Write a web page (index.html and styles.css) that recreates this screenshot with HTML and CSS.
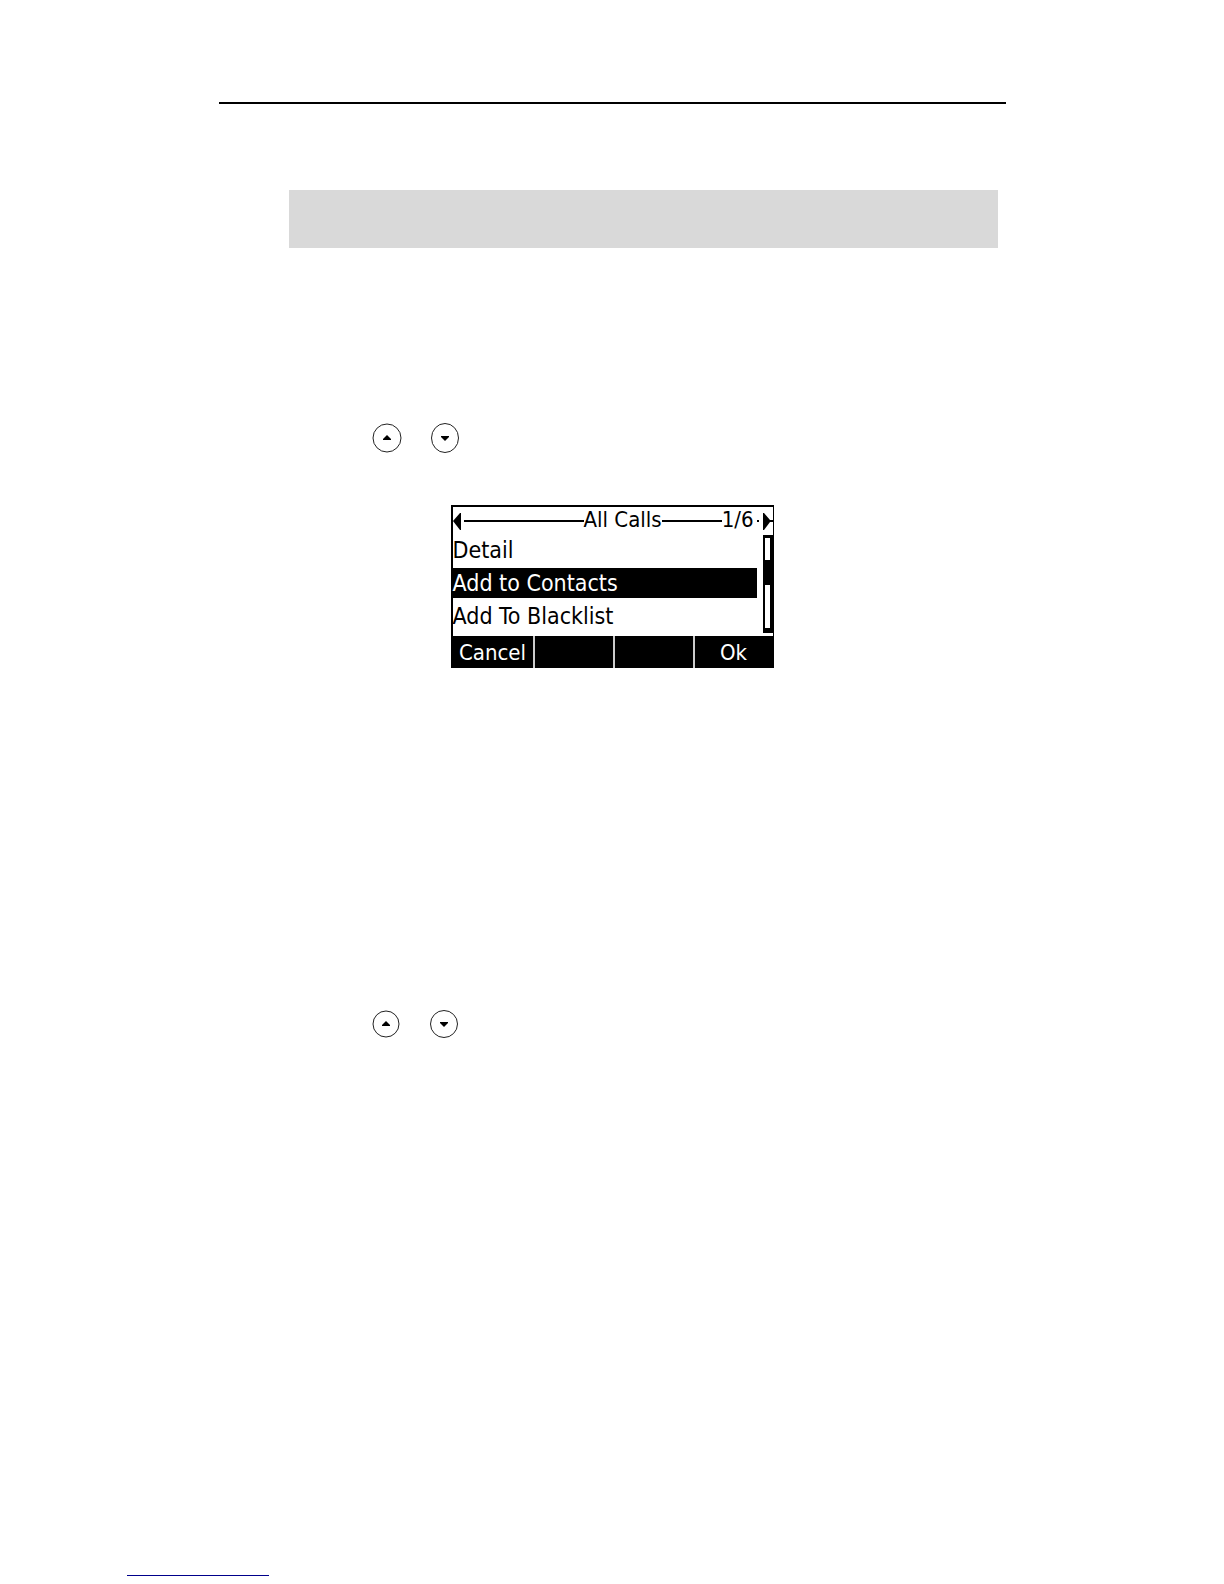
FILE: index.html
```html
<!DOCTYPE html>
<html lang="en">

<head>
  <meta charset="UTF-8" />
  <meta name="viewport" content="width=device-width, initial-scale=1.0" />
  <title>All Calls</title>
  <link rel="stylesheet" href="styles.css">
</head>

<body>
  <main class="page">
    <hr class="rule">
    <div class="note"></div>

    <div class="nav-keys">
      <button type="button" aria-label="Up">
        <svg width="30" height="30" viewBox="0 0 30 30">
          <circle cx="15" cy="15" r="14" />
          <path d="M11 17v-1l4-4 4 4v1z" />
        </svg>
      </button>
      <button type="button" aria-label="Down">
        <svg width="30" height="30" viewBox="0 0 30 30">
          <ellipse cx="15" cy="15" rx="13.5" ry="14.5" />
          <path d="M11 13h8v1l-4 4-4-4z" />
        </svg>
      </button>
    </div>

    <section class="screen">
      <header class="title-bar">
        <svg width="9" height="17" viewBox="0 0 9 17"><path d="M0 8L7 0h1v17H7z" /></svg>
        <span class="line line-left"></span>
        <span class="title-text">All Calls</span>
        <span class="line"></span>
        <span class="title-text">1/6</span>
        <span class="line dot"></span>
        <svg width="11" height="17" viewBox="0 0 11 17"><path d="M1 0h1l6 7h3v2H8l-6 8H1z" /></svg>
      </header>
      <div class="screen-body">
        <ul class="menu">
          <li>Detail</li>
          <li class="selected">Add to Contacts</li>
          <li>Add To Blacklist</li>
        </ul>
        <div class="scrollbar">
          <span class="track-top"></span>
          <span class="thumb"></span>
          <span class="track-bottom"></span>
        </div>
      </div>
      <footer class="soft-keys">
        <button type="button">Cancel</button>
        <button type="button" aria-label="Soft key 2"></button>
        <button type="button" aria-label="Soft key 3"></button>
        <button type="button">Ok</button>
      </footer>
    </section>

    <div class="nav-keys nav-keys-small">
      <button type="button" aria-label="Up">
        <svg width="28" height="28" viewBox="0 0 28 28">
          <circle cx="14" cy="14" r="13" />
          <path d="M10 16v-1l4-4 4 4v1z" />
        </svg>
      </button>
      <button type="button" aria-label="Down">
        <svg width="28" height="28" viewBox="0 0 28 28">
          <circle cx="14" cy="14" r="13.5" />
          <path d="M10 12h8v1l-4 4-4-4z" />
        </svg>
      </button>
    </div>
  </main>

  <footer class="page-footer">
    <div class="link-line"></div>
  </footer>
</body>

</html>
```

FILE: styles.css
```css
* {
  box-sizing: border-box;
}

body {
  margin: 0;
  min-height: 100vh;
  display: flex;
  flex-direction: column;
  background-color: #fff;
  color: #000;
}

button {
  padding: 0;
  border: 0;
  background: none;
  color: inherit;
  font: inherit;
}

.page {
  width: 100%;
  max-width: 787px;
  margin: 0 auto;
  padding-top: 102px;
}

.rule {
  height: 2px;
  margin: 0;
  border: 0;
  background-color: #000;
}

.note {
  height: 58px;
  margin: 86px 8px 0 70px;
  background-color: #d9d9d9;
}

/* up / down keys */
.nav-keys {
  display: flex;
  gap: 28px;
  margin: 175px 0 0 153px;
}

.nav-keys-small {
  gap: 30px;
  margin-top: 342px;
}

.nav-keys svg {
  display: block;
}

.nav-keys circle,
.nav-keys ellipse {
  fill: none;
  stroke: #222;
}

/* phone display */
.screen {
  width: 323px;
  max-width: 100%;
  margin: 52px auto 0;
  border: 2px solid #000;
  border-right-width: 1px;
  border-bottom: 0;
  font-family: "DejaVu Sans Condensed", "DejaVu Sans", sans-serif;
  font-size: 22px;
  line-height: 30px;
}

.title-bar {
  display: flex;
  align-items: center;
  height: 28px;
}

.title-text {
  align-self: flex-start;
  line-height: 26px;
}

.title-bar .line {
  flex: 1;
  height: 2px;
  background-color: #000;
}

.title-bar .line-left {
  flex: 2;
  margin-left: 2px;
}

.title-bar .dot {
  flex: none;
  width: 2px;
  margin: 0 3px;
}

.screen-body {
  display: flex;
  justify-content: space-between;
  height: 101px;
}

.menu {
  width: 304px;
  margin: 0;
  padding: 0;
  display: flex;
  flex-direction: column;
  gap: 3px;
  list-style: none;
  font-size: 23px;
}

.menu .selected {
  background-color: #000;
  color: #fff;
}

.scrollbar {
  display: flex;
  flex-direction: column;
  width: 10px;
  height: 98px;
  padding: 3px 3px 5px 2px;
  background-color: #000;
}

.scrollbar span {
  background-color: #fff;
}

.scrollbar .track-top {
  height: 22px;
}

.scrollbar .thumb {
  height: 25px;
  background-color: #000;
}

.scrollbar .track-bottom {
  flex: 1;
}

.soft-keys {
  display: grid;
  grid-template-columns: repeat(4, 1fr);
  height: 32px;
  background-color: #000;
  color: #fff;
}

.soft-keys button {
  padding-top: 2px;
}

.soft-keys button + button {
  border-left: 2px solid #ccc;
}

.page-footer {
  margin-top: auto;
  padding: 0 127px 8px;
}

.link-line {
  width: 142px;
  height: 1px;
  background-color: #00008b;
}
```
